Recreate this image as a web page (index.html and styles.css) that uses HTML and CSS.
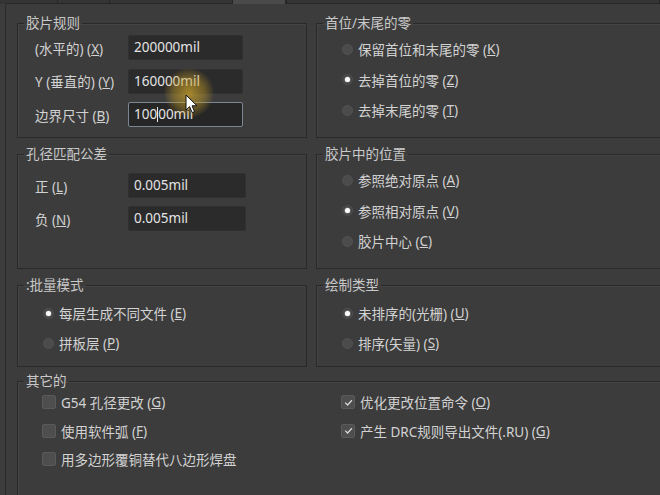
FILE: index.html
```html
<!DOCTYPE html>
<html lang="zh-CN">
<head>
	<meta charset="UTF-8">
	<title>Gerber 设置</title>
	<link rel="stylesheet" href="styles.css">
</head>

<body>
	<div class="tabs">
		<span class="tab tab-w52"></span>
		<span class="tab tab-w52"></span>
		<span class="tab tab-w123"></span>
		<span class="tab tab-on"></span>
		<span class="tab tab-rest"></span>
	</div>

	<div class="panel">
		<div class="grid">
			<!-- 胶片规则 -->
			<fieldset class="group">
				<legend>胶片规则</legend>
				<div class="fields fields-top">
					<div class="field">
						<label>(水平的) (<u>X</u>)</label>
						<div class="input">200000mil</div>
					</div>
					<div class="field">
						<label>Y (垂直的) (<u>Y</u>)</label>
						<div class="input">160000mil</div>
					</div>
					<div class="field">
						<label>边界尺寸 (<u>B</u>)</label>
						<div class="input input-focus">100<span class="caret"></span>00mil</div>
					</div>
				</div>
			</fieldset>

			<!-- 首位/末尾的零 -->
			<fieldset class="group group-open">
				<legend>首位/末尾的零</legend>
				<div class="list list-3">
					<div class="opt"><span class="radio"></span>保留首位和末尾的零 (<u>K</u>)</div>
					<div class="opt"><span class="radio radio-on"></span>去掉首位的零 (<u>Z</u>)</div>
					<div class="opt"><span class="radio"></span>去掉末尾的零 (<u>T</u>)</div>
				</div>
			</fieldset>

			<!-- 孔径匹配公差 -->
			<fieldset class="group">
				<legend>孔径匹配公差</legend>
				<div class="fields fields-tol">
					<div class="field">
						<label>正 (<u>L</u>)</label>
						<div class="input input-wide">0.005mil</div>
					</div>
					<div class="field">
						<label>负 (<u>N</u>)</label>
						<div class="input input-wide">0.005mil</div>
					</div>
				</div>
			</fieldset>

			<!-- 胶片中的位置 -->
			<fieldset class="group group-open">
				<legend>胶片中的位置</legend>
				<div class="list list-3">
					<div class="opt"><span class="radio"></span>参照绝对原点 (<u>A</u>)</div>
					<div class="opt"><span class="radio radio-on"></span>参照相对原点 (<u>V</u>)</div>
					<div class="opt"><span class="radio"></span>胶片中心 (<u>C</u>)</div>
				</div>
			</fieldset>

			<!-- 批量模式 -->
			<fieldset class="group">
				<legend>:批量模式</legend>
				<div class="list list-2">
					<div class="opt"><span class="radio radio-on"></span>每层生成不同文件 (<u>E</u>)</div>
					<div class="opt"><span class="radio"></span>拼板层 (<u>P</u>)</div>
				</div>
			</fieldset>

			<!-- 绘制类型 -->
			<fieldset class="group group-open">
				<legend>绘制类型</legend>
				<div class="list list-2">
					<div class="opt"><span class="radio radio-on"></span>未排序的(光栅) (<u>U</u>)</div>
					<div class="opt"><span class="radio"></span>排序(矢量) (<u>S</u>)</div>
				</div>
			</fieldset>

			<!-- 其它的 -->
			<fieldset class="group group-open group-other">
				<legend>其它的</legend>
				<div class="other">
					<div class="list list-chk list-left">
						<div class="opt"><span class="check"></span>G54 孔径更改 (<u>G</u>)</div>
						<div class="opt"><span class="check"></span>使用软件弧 (<u>F</u>)</div>
						<div class="opt"><span class="check"></span>用多边形覆铜替代八边形焊盘</div>
					</div>
					<div class="list list-chk">
						<div class="opt"><span class="check"><svg viewBox="0 0 13 13" width="13" height="13"><path d="M3.2 6.6 L5.6 9 L9.9 4.2" fill="none" stroke="#d8d8d8" stroke-width="1.3"/></svg></span>优化更改位置命令 (<u>O</u>)</div>
						<div class="opt"><span class="check"><svg viewBox="0 0 13 13" width="13" height="13"><path d="M3.2 6.6 L5.6 9 L9.9 4.2" fill="none" stroke="#d8d8d8" stroke-width="1.3"/></svg></span>产生 DRC规则导出文件(.RU) (<u>G</u>)</div>
					</div>
				</div>
			</fieldset>
		</div>
	</div>

	<!-- 鼠标高亮 + 指针 -->
	<div class="mouse-glow"></div>
	<svg class="mouse-cursor" viewBox="0 0 13 20" width="13" height="20">
		<path d="M1 1 L1 16 L4.6 12.6 L7.2 18.6 L9.6 17.6 L7 11.8 L12 11.8 Z" fill="#fff" stroke="#111" stroke-width="1"/>
	</svg>
</body>
</html>
```

FILE: styles.css
```css
body {
	margin: 0;
	padding: 0;
	height: 495px;
	overflow: hidden;
	position: relative;
	background: #3c3c3c;
	color: #d2d2d2;
	font-size: 13.5px;
	font-family: "Noto Sans", "Noto Sans CJK SC", sans-serif;
}

u {
	text-decoration: underline;
	text-underline-offset: 1px;
}

/* 顶部标签条 */
.tabs {
	height: 4px;
	display: flex;
	padding-left: 6px;
	background: #353535;
}

.tab {
	height: 3px;
	border-right: 1px solid #262626;
	border-bottom: 1px solid #262626;
}

.tab-w52 {
	width: 51px;
}

.tab-w123 {
	width: 122px;
}

.tab-on {
	width: 52px;
	height: 4px;
	border-bottom: 0;
	background: #4a4a4a;
}

.tab-rest {
	flex: 1;
	border-left: 1px solid #262626;
}

.panel {
	height: 491px;
	margin-left: 5px;
	padding-left: 11px;
	border-left: 1px solid #2a2a2a;
	box-sizing: border-box;
}

.grid {
	display: grid;
	grid-template-columns: 290px 1fr;
	grid-template-rows: 124px 124px 91px 130px;
	column-gap: 9px;
	row-gap: 7px;
	padding-top: 10px;
}

/* 分组框 */
.group {
	margin: 0;
	padding: 0;
	min-width: 0;
	border: 1px solid #292929;
	box-shadow: 1px 1px 0 #444 inset;
}

/* 右侧分组延伸出窗口，看不到右边框 */
.group-open {
	border-right: 0;
}

.group legend {
	margin-left: 6px;
	padding: 0 2px;
	line-height: 18px;
	color: #c9c9c9;
}

.group-other {
	grid-column: 1 / 3;
	margin-top: -2px;
}

/* 输入框行 */
.fields {
	display: flex;
	flex-direction: column;
	gap: 8.5px;
	padding-left: 17px;
}

.fields-top {
	padding-top: 3px;
}

.fields-tol {
	padding-top: 10px;
	gap: 8px;
}

.field {
	display: flex;
	align-items: center;
	height: 25px;
}

.field label {
	width: 93px;
}

.input {
	width: 115px;
	height: 25px;
	line-height: 23px;
	box-sizing: border-box;
	padding-left: 5px;
	background: #2b2b2b;
	border: 1px solid #303030;
	border-radius: 2px;
	color: #e4e4e4;
}

.input-wide {
	width: 118px;
}

.input-focus {
	background: #262626;
	border-color: #7b8794;
}

.caret {
	display: inline-block;
	width: 1px;
	height: 15px;
	background: #e8e8e8;
	vertical-align: -3px;
}

/* 单选/复选 */
.list {
	display: flex;
	flex-direction: column;
	padding-left: 25px;
}

.list-3 {
	padding-top: 5px;
	gap: 6.5px;
}

.list-2 {
	padding-top: 7px;
	gap: 6px;
}

.list-chk {
	gap: 4.5px;
}

.list-left {
	padding-left: 24px;
}

.opt {
	display: flex;
	align-items: center;
	height: 24px;
	white-space: nowrap;
}

.radio {
	width: 11px;
	height: 11px;
	margin-right: 5px;
	box-sizing: border-box;
	border-radius: 50%;
	background: #4b4b4b;
	border: 1px solid #525252;
	display: flex;
	align-items: center;
	justify-content: center;
}

.radio-on {
	background: #3a3a3a;
}

.radio-on::after {
	content: "";
	width: 5px;
	height: 5px;
	border-radius: 50%;
	background: #fafafa;
	box-shadow: 0 0 2px #fff;
}

.check {
	width: 14px;
	height: 14px;
	margin-right: 5px;
	box-sizing: border-box;
	background: #4e4e4e;
	border: 1px solid #5a5a5a;
	border-radius: 2px;
	display: flex;
}

.check svg {
	margin: -0.5px;
}

.other {
	display: grid;
	grid-template-columns: 289px 1fr;
	column-gap: 9px;
}

/* 鼠标 */
.mouse-glow {
	position: absolute;
	left: 164px;
	top: 68px;
	width: 50px;
	height: 50px;
	border-radius: 50%;
	background: radial-gradient(circle, rgba(214, 170, 40, 0.7) 0%, rgba(200, 160, 40, 0.4) 45%, rgba(200, 160, 40, 0) 72%);
}

.mouse-cursor {
	position: absolute;
	left: 185px;
	top: 94px;
}
```
